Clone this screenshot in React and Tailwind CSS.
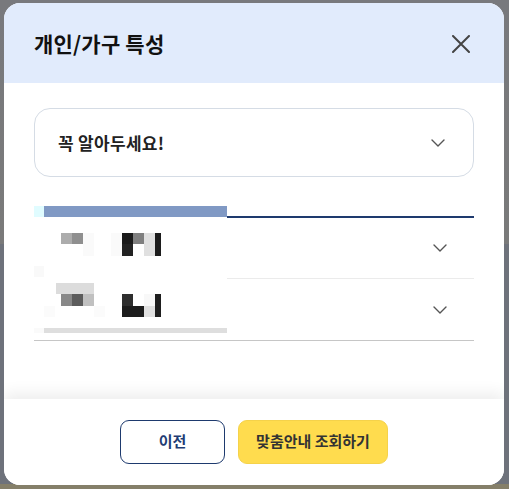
import { ChevronDown } from 'lucide-react';

const font = { fontFamily: '"Noto Sans CJK KR", "Noto Sans", sans-serif' };

// blurred name blocks (mosaic), relative to the left column
const blocks = [
  [27, 16, 11, 11, '#acacac'],
  [38, 16, 11, 11, '#8f8f8f'],
  [49, 16, 11, 23, '#fafafa'],
  [77, 16, 11, 23, '#fafafa'],
  [88, 16, 11, 11, '#1a1a1a'],
  [88, 27, 11, 12, '#222222'],
  [99, 16, 11, 11, '#7f7f7f'],
  [110, 16, 11, 23, '#e0e0e0'],
  [121, 16, 6, 23, '#1c1c1c'],
  [0, 49, 10, 11, '#f9f9f9'],
  [22, 66, 38, 11, '#dcdcdc'],
  [27, 77, 11, 12, '#888888'],
  [38, 77, 11, 12, '#5c5c5c'],
  [49, 77, 11, 12, '#c0c0c0'],
  [88, 77, 11, 12, '#2e2e2e'],
  [88, 89, 22, 11, '#1c1c1c'],
  [110, 77, 11, 12, '#f8f8f8'],
  [110, 89, 11, 11, '#e0e0e0'],
  [121, 77, 6, 23, '#1e1e1e'],
  [10, 89, 11, 11, '#fbfbfb'],
  [60, 89, 11, 11, '#fbfbfb'],
];

function Chevron() {
  return <ChevronDown className="w-[24px] h-[24px] text-[#555]" strokeWidth={1.4} />;
}

export default function App() {
  return (
    <div
      className="w-[509px] h-[489px] overflow-hidden bg-[linear-gradient(to_bottom,#78797d_0%,#7a7a7a_50%,#6e727b_50%,#6e727b_99%,#857f69_99%)] pt-[3px] pl-[4px]"
      style={font}
    >
      <div className="w-[500px] h-[482px] bg-white rounded-[16px] overflow-hidden flex flex-col">
        {/* header */}
        <div className="h-[80px] shrink-0 bg-[#e1ebfc] flex items-center justify-between pl-[30px] pr-[34px] pt-[2px]">
          <h2 className="text-[21px] font-bold text-[#111] tracking-[0.2px]">개인/가구 특성</h2>
          <svg width="18" height="18" viewBox="0 0 18 18" className="block">
            <path d="M1 1L17 17M17 1L1 17" stroke="#444" strokeWidth="2" strokeLinecap="round" />
          </svg>
        </div>

        {/* body */}
        <div className="flex-1 px-[30px] pt-[25px]">
          <div className="h-[69px] border border-[#d5dce5] rounded-[16px] flex items-center justify-between pl-[23px] pr-[23px]">
            <span className="text-[17px] font-bold text-[#222] tracking-[0.3px]">꼭 알아두세요!</span>
            <Chevron />
          </div>

          <div className="mt-[29px] flex">
            {/* left column (blurred) */}
            <div className="w-[193px] flex flex-col">
              <div className="h-[11px] flex">
                <div className="w-[10px] bg-[#e0fcff]" />
                <div className="flex-1 bg-[#8099c4]" />
              </div>
              <svg width="193" height="111" className="block">
                {blocks.map(([x, y, w, h, c], i) => (
                  <rect key={i} x={x} y={y} width={w} height={h} fill={c} />
                ))}
              </svg>
              <div className="h-[5px] flex">
                <div className="w-[10px] bg-[#fafafa]" />
                <div className="flex-1 bg-[#dedede]" />
              </div>
              <div className="h-[8px] border-b border-[#c6c6c6]" />
            </div>

            {/* right column */}
            <div className="flex-1 flex flex-col">
              <div className="h-[12px] border-b-2 border-[#1e3a6e]" />
              <div className="h-[61px] border-b border-[#ebebeb] flex items-center justify-end pr-[22px]">
                <Chevron />
              </div>
              <div className="h-[62px] border-b border-[#c6c6c6] flex items-center justify-end pr-[22px]">
                <Chevron />
              </div>
            </div>
          </div>
        </div>

        {/* footer */}
        <div className="h-[86px] shrink-0 bg-white shadow-[0_-6px_14px_rgba(0,0,0,0.07)] flex items-center justify-center gap-[13px] pb-[1px]">
          <button className="w-[105px] h-[44px] rounded-[9px] border border-[#1e3a6e] bg-white text-[15px] font-bold text-[#1f3d74]">
            이전
          </button>
          <button className="w-[150px] h-[44px] rounded-[9px] border border-[#f5d24a] bg-[#ffdc4e] text-[15px] font-bold text-[#333]">
            맞춤안내 조회하기
          </button>
        </div>
      </div>
    </div>
  );
}
